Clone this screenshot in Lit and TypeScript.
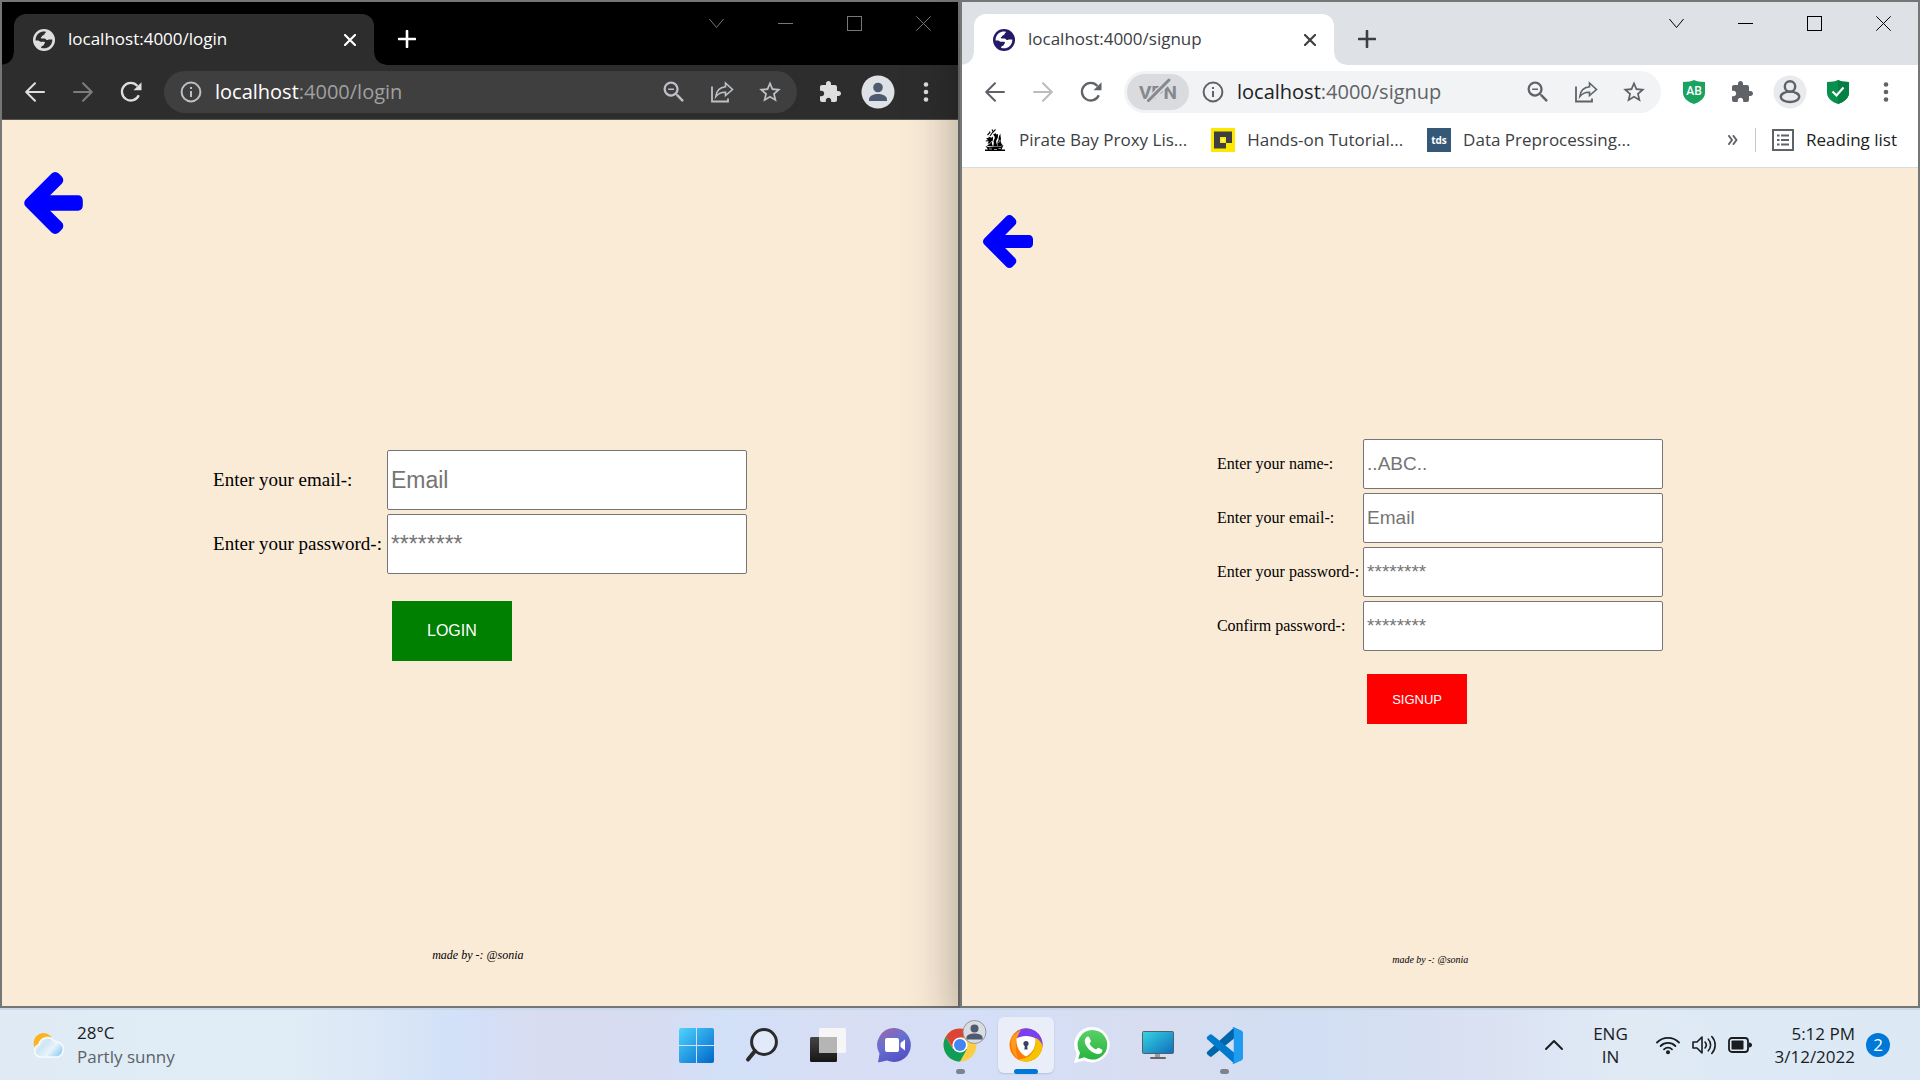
import { LitElement, html, svg, css, nothing, TemplateResult } from "lit";
import { customElement, property } from "lit/decorators.js";
import { classMap } from "lit/directives/class-map.js";

/* ---------- icons ---------- */

const icon = (w: number, h: number, box: string, body: unknown) => html`
  <svg width=${w} height=${h} viewBox=${box} aria-hidden="true" fill="currentColor">${body}</svg>`;

const line = (w: number, h: number, d: string, width = 2) =>
  icon(w, h, `0 0 ${w} ${h}`, svg`<path d=${d} fill="none" stroke="currentColor" stroke-width=${width}
    stroke-linecap="round" stroke-linejoin="round"></path>`);

const globe = icon(22, 22, "0 0 22 22", svg`
  <circle cx="11" cy="11" r="11"></circle>
  <path class="land" d="M2.6 11.6C2.4 7.600 4.500 4.200 8.200 3C9.500 2.600 11.600 2.400 12.800 2.700C13.200 3.400 12.400 3.900 11.600 4.300C12 5.400 11.200 6 9.800 6.400C8.900 6.700 9.200 7.600 8.400 8.100C7.400 8.600 7.500 9.400 8.500 9.500L11.600 9.600C12.700 9.800 12.900 11 14 11.100C15 11.100 15.400 10.500 16.600 10.500L19.300 10.500C19.600 14.800 16.500 18.600 12.600 19.200C11.200 19.500 9.400 19.300 8.200 19C8 17.700 8.700 16.900 10 16.800C11.300 16.600 10.600 15 11.600 14.600C12.400 14.200 12 12.900 11 12.800L7.500 12.700C6.400 12.500 6.200 11.600 5.200 11.500Z"></path>`);

const backIcon = line(20, 20, "M19 10H1.500M10 1.200L1.200 10L10 18.800");
const forwardIcon = line(20, 20, "M1 10H18.500M10 1.200L18.800 10L10 18.800");
const reloadIcon = icon(22, 22, "0 0 22 22", svg`
  <path d="M18.800 14.200A8.800 8.800 0 1 1 17.400 4.900" fill="none" stroke="currentColor" stroke-width="2.300"></path>
  <path d="M21.500 1.200V9.200H13.500Z"></path>`);
const infoIcon = icon(22, 22, "0 0 22 22", svg`
  <circle cx="11" cy="11" r="9.400" fill="none" stroke="currentColor" stroke-width="2"></circle>
  <rect x="10" y="10" width="2" height="6"></rect><rect x="10" y="6" width="2" height="2"></rect>`);
const zoomOutIcon = icon(28, 28, "0 0 24 24", svg`
  <path d="M15.500 14h-.79l-.28-.27A6.471 6.471 0 0 0 16 9.500 6.500 6.500 0 1 0 9.500 16c1.610 0 3.090-.59 4.230-1.570l.27.28v.79l5 4.990L20.490 19l-4.990-5zm-6 0C7.010 14 5 11.990 5 9.500S7.010 5 9.500 5 14 7.010 14 9.500 11.990 14 9.500 14zM7 8.900h5v1.300H7z"></path>`);
const shareIcon = icon(24, 24, "0 0 24 24", svg`
  <path d="M2 6.500V21.500H18V18.500" fill="none" stroke="currentColor" stroke-width="1.800"></path>
  <path d="M15.500 3L22.500 9.500L15.500 15.500V12.200C11.500 12 8.500 13 5.800 16.600C6.300 11 9.500 7.300 15.500 6.700Z" fill="none" stroke="currentColor" stroke-width="1.600" stroke-linejoin="miter"></path>`);
const starIcon = icon(26, 26, "0 0 24 24", svg`
  <path d="M22 9.240l-7.190-.62L12 2 9.190 8.630 2 9.240l5.460 4.730L5.820 21 12 17.270 18.180 21l-1.630-7.030L22 9.240zM12 15.400l-3.760 2.270 1-4.280-3.320-2.880 4.380-.38L12 6.100l1.710 4.040 4.380.38-3.320 2.880 1 4.280L12 15.400z"></path>`);
const puzzleIcon = icon(24, 24, "0 0 24 24", svg`
  <path d="M20.500 11H19V7c0-1.100-.9-2-2-2h-4V3.500C13 2.120 11.880 1 10.500 1S8 2.120 8 3.500V5H4c-1.100 0-1.990.9-1.990 2v3.800H3.500c1.490 0 2.700 1.210 2.700 2.700s-1.210 2.700-2.700 2.700H2V20c0 1.100.9 2 2 2h3.800v-1.500c0-1.490 1.210-2.700 2.700-2.700 1.490 0 2.700 1.210 2.700 2.700V22H17c1.100 0 2-.9 2-2v-4h1.500c1.380 0 2.500-1.120 2.500-2.500S21.880 11 20.500 11z"></path>`);
const dotsIcon = icon(6, 20, "0 0 6 20", svg`
  <circle cx="3" cy="2.500" r="2.300"></circle><circle cx="3" cy="10" r="2.300"></circle><circle cx="3" cy="17.500" r="2.300"></circle>`);
const personDisc = icon(34, 34, "0 0 34 34", svg`
  <circle cx="17" cy="17" r="16.500" fill="#dee1e6"></circle>
  <circle cx="17" cy="12.500" r="4.800" fill="#4e5a70"></circle>
  <path d="M8 26V24.200C8 20.700 13.200 19 17 19S26 20.700 26 24.200V26Z" fill="#4e5a70"></path>`);
const outlinePerson = icon(34, 34, "0 0 34 34", svg`
  <circle cx="17" cy="17" r="16.500" fill="#e8eaed"></circle>
  <g fill="none" stroke="currentColor" stroke-width="2.400">
    <circle cx="17" cy="11.500" r="5.200"></circle>
    <ellipse cx="17" cy="21.800" rx="9.200" ry="5.200"></ellipse></g>`);
const shield = (fill: string, mark: unknown) => icon(22, 24, "0 0 22 24", svg`
  <path d="M11 0C13 1.200 17 2 22 2V13C22 18.500 16 22.500 11 24C6 22.500 0 18.500 0 13V2C5 2 9 1.200 11 0Z" fill=${fill}></path>${mark}`);
const adShield = shield("#1aa260", svg`<text x="11" y="15" text-anchor="middle" fill="#fff"
  font-family="Roboto, sans-serif" font-weight="500" font-size="12">AB</text>`);
const checkShield = shield("#0a8f4c", svg`<path d="M11 0C13 1.200 17 2 22 2V13C22 18.500 16 22.500 11 24Z" fill="#067f42"></path>
  <path d="M5.500 11.500L9.500 15.500L16.500 7.500" fill="none" stroke="#fff" stroke-width="2.200"></path>`);
const backArrow = (w: number, h: number) => icon(w, h, "192 181 1472 1558", svg`
  <path d="M1664 896v128q0 53-32.500 90.500t-84.500 37.500h-704l293 294q38 36 38 90t-38 90l-75 76q-37 37-90 37-52 0-91-37l-651-652q-37-37-37-90 0-52 37-91l651-650q38-38 91-38 52 0 90 38l75 74q38 38 38 91t-38 91l-293 293h704q52 0 84.500 37.500t32.500 90.500z"></path>`);

const shipIcon = icon(24, 24, "0 0 24 24", svg`
  <g fill="#000">
    <path d="M2.500 18L6 19.200L18 18.500L20.500 17L18.500 21.500H22V23H2V21.500H5Z"></path>
    <path d="M3 10.500L6 9.500L5.500 8.500L8.500 9.800L9.800 8.500C10.500 11 9.500 13 8.800 14.500C8.800 16 9.500 17 10 18.500L4 18L6.500 15.500L4.500 15.500C6.500 13.500 5.500 12 3 10.500Z"></path>
    <path d="M10 6.500L13 5L12.800 6.500L14.800 6C15.500 8.500 14.500 11 13.200 12.800C13 15 14 17 15 18.500L10 18.500C11.800 15 9.500 13.500 11.500 11C12.200 9.500 11.500 7.500 10 6.500Z"></path>
    <path d="M17.500 5.500C17 8 18.500 10 17.800 12C17.200 14 18.500 16 20 17.500L15 18.500C13.800 15.500 14.500 13.500 15.500 12C15.500 9.500 16 7.500 17.500 5.500Z"></path>
  </g>
  <path d="M4.500 7L7 4.500L6.500 3.500M7 8L9.500 4.500L12.500 1.500M10 3.500L9 1.500M2.800 13L6 12.500" fill="none" stroke="#000" stroke-width="1.100"></path>
  <path d="M6 21H9M11 21.500H14M15.500 20.500H18M6 16.500L9 13M15.500 15L17 12" stroke="#fff" stroke-width=".6"></path>`);
const tutorialIcon = icon(24, 24, "0 0 24 24", svg`
  <rect width="24" height="24" fill="#ffe800"></rect>
  <path d="M3 3.500H21V15H15V20.500H3Z" fill="#3c4043"></path>
  <rect x="9" y="9" width="6" height="6" fill="#ffe800"></rect>
  <rect x="10.500" y="10.500" width="3" height="3" fill="#fff27a"></rect>`);
const tdsIcon = icon(24, 24, "0 0 24 24", svg`
  <rect width="24" height="24" fill="#355876"></rect>
  <text x="12" y="15.500" text-anchor="middle" fill="#fff" font-family="Open Sans, sans-serif"
    font-weight="700" font-size="10">tds</text>`);
const readingIcon = icon(22, 22, "0 0 22 22", svg`
  <path d="M1 1H21V21H1Z" fill="none" stroke="currentColor" stroke-width="2"></path>
  <path d="M5 6.500H7.500M9 6.500H17M5 11H7.500M9 11H17M5 15.500H7.500M9 15.500H17" stroke="currentColor" stroke-width="2"></path>`);

const minimizeIcon = icon(15, 15, "0 0 15 15", svg`<rect y="7" width="15" height="1"></rect>`);
const maximizeIcon = icon(15, 15, "0 0 15 15", svg`<rect x=".5" y=".5" width="14" height="14" fill="none" stroke="currentColor"></rect>`);
const closeIcon = icon(15, 15, "0 0 15 15", svg`<path d="M.3 .3L14.700 14.700M14.700 .3L.3 14.700" stroke="currentColor"></path>`);
const searchTabsIcon = icon(15, 15, "0 0 15 15", svg`<path d="M.4 3L7.500 11.500L14.600 3" fill="none" stroke="currentColor"></path>`);

/* ---------- shared types ---------- */

interface Field { id: string; label: string; placeholder: string; type: string; }
interface Bookmark { title: string; icon: TemplateResult; }

/* ---------- form page shown inside a browser window ---------- */

@customElement("account-page")
export class AccountPage extends LitElement {
  @property({ type: Array }) fields: Field[] = [];
  @property() action = "";
  @property({ type: Boolean }) compact = false;

  static styles = css`
    :host { display: flex; flex: 1; min-height: 0; }
    .page {
      --label: 19px; --text: 23px; --field-w: 360px; --field-h: 60px; --col: 5px;
      --button-w: 120px; --button-text: 16px; --button-gap: 27px; --button-bg: #008000;
      --note: 12px; --note-line: 14px;
      flex: 1; display: flex; flex-direction: column;
      background: #faebd7; color: #000;
      font-family: "Liberation Serif", "Times New Roman", serif;
    }
    .page.compact {
      --label: 16px; --text: 19px; --field-w: 300px; --field-h: 50px; --col: 4px;
      --button-w: 100px; --button-text: 13px; --button-gap: 23px; --button-bg: #ff0000;
      --note: 10px; --note-line: 12px;
    }
    header { padding: 52px 22px 0; }
    .compact header { padding: 47px 21px 0; }
    header a { display: inline-flex; color: #0000ff; vertical-align: top; }
    svg { display: block; }
    form {
      flex: 1; display: grid; justify-content: center; align-content: center;
      grid-template-columns: auto var(--field-w); gap: 4px var(--col);
    }
    label { align-self: center; font-size: var(--label); line-height: 24px; white-space: nowrap; }
    input {
      box-sizing: border-box; width: 100%; height: var(--field-h);
      padding: 0 3px; border: 1px solid #767676; border-radius: 2px;
      background: #fff; font-family: "Liberation Sans", Arial, sans-serif; font-size: var(--text);
    }
    input::placeholder { color: #757575; }
    .submit {
      grid-column: 2; width: var(--button-w); height: var(--field-h);
      margin: calc(var(--button-gap) - 4px) 0 0 var(--col); padding: 0; border: 0;
      background: var(--button-bg); color: #fff;
      font-family: "Liberation Sans", Arial, sans-serif; font-size: var(--button-text);
    }
    footer {
      padding: 71px 0 44px 45%; font-style: italic;
      font-size: var(--note); line-height: var(--note-line);
    }
    .compact footer { padding: 59px 0 40px 45%; }
  `;

  render() {
    return html`
      <main class=${classMap({ page: true, compact: this.compact })}>
        <header><a href="#" aria-label="Back">${this.compact ? backArrow(50, 53) : backArrow(59, 62)}</a></header>
        <form @submit=${(e: Event) => e.preventDefault()}>
          ${this.fields.map((f) => html`
            <label for=${f.id}>${f.label}</label>
            <input id=${f.id} type=${f.type} placeholder=${f.placeholder} autocomplete="off">`)}
          <button class="submit" type="submit">${this.action}</button>
        </form>
        <footer>made by -: @sonia</footer>
      </main>`;
  }
}

/* ---------- browser window ---------- */

@customElement("browser-window")
export class BrowserWindow extends LitElement {
  @property() path = "";
  @property({ type: Boolean }) dark = false;
  @property({ type: Boolean }) vpn = false;
  @property({ type: Array }) bookmarks: Bookmark[] = [];
  @property({ attribute: false }) extensions: { name: string; icon: TemplateResult }[] = [];

  static styles = css`
    :host { display: flex; min-width: 0; font-family: "Open Sans", "Noto Sans", sans-serif; }
    .window {
      --strip: #dee1e6; --bar: #fff; --box: #f1f3f4; --fg: #3c4043; --icon: #5f6368;
      --faint: #babcbe; --host: #202124; --path: #5f6368; --caption: #000;
      --edge: #dadce0; --globe: #241a66;
      flex: 1; min-width: 0; display: flex; flex-direction: column;
      border: 2px solid #757676; background: var(--bar);
    }
    .dark {
      --strip: #000; --bar: #2d2d2d; --box: #3f3f3f; --fg: #fff; --icon: #dedede;
      --faint: #7c7c7c; --host: #fff; --path: #a0a0a0; --caption: #777;
      --edge: #5a5354; --globe: #dedede;
    }
    svg { display: block; flex: none; }
    button {
      display: flex; align-items: center; justify-content: center; flex: none;
      padding: 0; border: 0; background: none; color: var(--icon); font: inherit;
    }
    .strip { display: flex; height: 63px; background: var(--strip); }
    .tab {
      position: relative; box-sizing: border-box; width: 360px; height: 51px;
      margin: 12px 0 0 12px; padding: 0 12px 0 19px;
      display: flex; align-items: center; gap: 13px;
      border-radius: 12px 12px 0 0; background: var(--bar); color: var(--fg);
      font-size: 17px; white-space: nowrap;
    }
    .tab::before, .tab::after {
      content: ""; position: absolute; bottom: 0; width: 12px; height: 12px;
    }
    .tab::before { left: -12px; background: radial-gradient(circle at 0 0, transparent 11px, var(--bar) 12px); }
    .tab::after { right: -12px; background: radial-gradient(circle at 100% 0, transparent 11px, var(--bar) 12px); }
    .tab .title { flex: 1; }
    .title, .bookmarks span { padding-bottom: 2px; }
    .tab .favicon { color: var(--globe); }
    .land { fill: var(--bar); }
    .tab button { width: 24px; height: 24px; color: var(--fg); }
    .new-tab { width: 42px; height: 42px; margin: 16px 0 0 12px; color: var(--fg); }
    .captions { display: flex; margin-left: auto; }
    .captions button { width: 69px; height: 43px; color: var(--caption); }
    .toolbar { display: flex; align-items: center; height: 54px; padding: 0 8px 0 9px; }
    .toolbar button { width: 48px; height: 42px; }
    .toolbar .off { color: var(--faint); }
    .omnibox {
      flex: 1; min-width: 0; display: flex; align-items: center; height: 42px;
      margin: 0 9px; padding: 0 3px; box-sizing: border-box; border-radius: 21px; background: var(--box);
    }
    .dark .omnibox button { color: #bdc1c6; }
    .address { flex: 1; min-width: 0; font-size: 20px; line-height: 30px; color: var(--path); white-space: nowrap; outline: none; }
    .address b { font-weight: 400; color: var(--host); }
    .omnibox .vpn {
      position: relative; width: 62px; height: 36px; border-radius: 18px; background: #d9dbdf;
      color: #85888c; font-family: Roboto, sans-serif; font-weight: 700; font-size: 19px;
    }
    .vpn svg { position: absolute; left: 18px; top: 4px; }
    .bookmarks {
      display: flex; align-items: center; height: 48px; padding: 0 21px 6px;
      box-sizing: border-box; color: var(--fg); font-size: 17px; white-space: nowrap;
    }
    .bookmarks a { display: flex; align-items: center; gap: 12px; margin-right: 24px; color: inherit; text-decoration: none; }
    .bookmarks .more { width: 24px; height: 24px; margin-left: auto; }
    .bookmarks .reading { gap: 12px; margin-left: 10px; padding-left: 16px; border-left: 1px solid #c6c8cb; height: 24px; }
    .reading span { color: #202124; }
    .edge { height: 1px; background: var(--edge); }
    .view { flex: 1; display: flex; min-height: 0; }
  `;

  render() {
    const cls = classMap({ window: true, dark: this.dark });
    return html`
      <section class=${cls}>
        <div class="strip">
          <div class="tab">
            <span class="favicon">${globe}</span>
            <span class="title">localhost:4000${this.path}</span>
            <button aria-label="Close tab">${icon(12, 12, "0 0 12 12", svg`<path d="M1 1L11 11M11 1L1 11" stroke="currentColor" stroke-width="2.200" stroke-linecap="round"></path>`)}</button>
          </div>
          <button class="new-tab" aria-label="New tab">${icon(18, 18, "0 0 18 18", svg`<path d="M9 1V17M1 9H17" stroke="currentColor" stroke-width="2.600" stroke-linecap="round"></path>`)}</button>
          <div class="captions">
            <button aria-label="Search tabs">${searchTabsIcon}</button>
            <button aria-label="Minimize">${minimizeIcon}</button>
            <button aria-label="Maximize">${maximizeIcon}</button>
            <button aria-label="Close">${closeIcon}</button>
          </div>
        </div>
        <nav class="toolbar">
          <button aria-label="Back">${backIcon}</button>
          <button class="off" aria-label="Forward" disabled>${forwardIcon}</button>
          <button aria-label="Reload">${reloadIcon}</button>
          <div class="omnibox">
            ${this.vpn ? html`<button class="vpn" aria-label="VPN off">VPN${icon(26, 26, "0 0 26 26", svg`
              <path d="M1 25L24 3" stroke="#d9dbdf" stroke-width="6"></path>
              <path d="M3.500 22.500L24 2" stroke="currentColor" stroke-width="3" stroke-linecap="round"></path>`)}</button>` : nothing}
            <button aria-label="Site information">${infoIcon}</button>
            <div class="address" role="textbox" contenteditable="true" spellcheck="false" aria-label="Address"><b>localhost</b>:4000${this.path}</div>
            <button aria-label="Zoom">${zoomOutIcon}</button>
            <button aria-label="Share">${shareIcon}</button>
            <button aria-label="Bookmark">${starIcon}</button>
          </div>
          ${this.extensions.map((x) => html`<button aria-label=${x.name}>${x.icon}</button>`)}
          <button aria-label="Menu">${dotsIcon}</button>
        </nav>
        ${this.bookmarks.length ? html`
          <nav class="bookmarks">
            ${this.bookmarks.map((b) => html`<a href="#">${b.icon}<span>${b.title}</span></a>`)}
            <button class="more" aria-label="More bookmarks">${line(10, 10, "M1 1L4 5L1 9M5.500 1L8.500 5L5.500 9", 2)}</button>
            <button class="reading">${readingIcon}<span>Reading list</span></button>
          </nav>` : nothing}
        <div class="edge"></div>
        <div class="view"><slot></slot></div>
      </section>`;
  }
}

/* ---------- taskbar ---------- */

const startIcon = icon(35, 35, "0 0 35 35", svg`
  <defs><linearGradient id="st" x1="0" y1="0" x2="1" y2="1"><stop offset="0" stop-color="#4fd4ff"></stop><stop offset="1" stop-color="#0067c9"></stop></linearGradient></defs>
  <path fill="url(#st)" d="M2 0H17V17H0V2A2 2 0 0 1 2 0ZM18 0H33A2 2 0 0 1 35 2V17H18ZM0 18H17V35H2A2 2 0 0 1 0 33ZM18 18H35V33A2 2 0 0 1 33 35H18Z"></path>`);
const searchIcon = icon(34, 36, "0 0 34 36", svg`
  <circle cx="19" cy="15" r="12.400" fill="#e2e9f8" stroke="#2b2b2b" stroke-width="3"></circle>
  <path d="M10 24L3 32.500" stroke="#2b2b2b" stroke-width="4" stroke-linecap="round"></path>`);
const taskViewIcon = icon(36, 34, "0 0 36 34", svg`
  <defs><linearGradient id="tv" x1="0" y1="0" x2="0" y2="1"><stop offset="0" stop-color="#444"></stop><stop offset="1" stop-color="#161616"></stop></linearGradient></defs>
  <rect y="9" width="27" height="25" rx="1.500" fill="url(#tv)"></rect>
  <rect x="9" y="0" width="27" height="25" rx="1.500" fill="#f6f6f6"></rect>
  <path d="M9 9H27V25H10A1 1 0 0 1 9 24Z" fill="#b5b5b5"></path>`);
const chatIcon = icon(35, 35, "0 0 35 35", svg`
  <defs><linearGradient id="ch" x1=".1" y1="0" x2=".6" y2="1"><stop offset="0" stop-color="#a066a8"></stop><stop offset=".45" stop-color="#6670cf"></stop><stop offset="1" stop-color="#5450c4"></stop></linearGradient></defs>
  <path d="M18 0A17 17 0 1 1 10 32.500L1 34.500L2.500 25.500A17 17 0 0 1 18 0Z" fill="url(#ch)"></path>
  <rect x="8" y="10" width="14" height="14" rx="2" fill="#fff"></rect>
  <path d="M23.500 15L28 11.500V22.500L23.500 19Z" fill="#fff"></path>`);
const chromeIcon = icon(46, 46, "0 0 46 46", svg`
  <circle cx="23" cy="23" r="16.500" fill="#ffcd41"></circle>
  <path d="M8.700 14.800A16.500 16.500 0 0 0 23 39.500L30 27L16 27Z" fill="#0f9d58"></path>
  <path d="M23 15.500H37.600A16.500 16.500 0 0 0 8.700 14.800L16.500 27Z" fill="#db4437"></path>
  <circle cx="23" cy="23" r="7.600" fill="#fff"></circle><circle cx="23" cy="23" r="6" fill="#4285f4"></circle>
  <circle cx="37.500" cy="10" r="11.500" fill="#d9dce0" stroke="#94979b"></circle>
  <circle cx="37.500" cy="6.500" r="4" fill="#4e5a70"></circle>
  <path d="M29.500 17.500V15.500C29.500 12.800 33.500 11.500 37.500 11.500S45.500 12.800 45.500 15.500V17.500Z" fill="#4e5a70"></path>`);
const avastIcon = icon(34, 34, "0 0 34 34", svg`
  <circle cx="17" cy="17" r="16.500" fill="#ff7a00"></circle>
  <path d="M8 3A16.500 16.500 0 0 1 33.500 19C31 10 22 5 8 11Z" fill="#7b3ff2"></path>
  <path d="M33.500 19A16.500 16.500 0 0 1 9 31.500C20 31 27 25 27 10C31 12 33 15 33.500 19Z" fill="#f5c400"></path>
  <path d="M12 .8L3 9C.5 16 3 25 9 31.500C6.500 24 6 16 8 10Z" fill="#ff9a1f"></path>
  <path d="M17 8C20.500 8 24 9 26.500 10.500C27 18 24 25 17 28.500C10 25 7 18 7.500 10.500C10 9 13.500 8 17 8Z" fill="#fff"></path>
  <circle cx="17" cy="15.500" r="2.600" fill="#3a3f66"></circle><path d="M16 16H18L18.600 21.500H15.400Z" fill="#3a3f66"></path>`);
const whatsappIcon = icon(36, 36, "0 0 36 36", svg`
  <defs><linearGradient id="wa" x1="0" y1="0" x2="0" y2="1"><stop offset="0" stop-color="#5bd066"></stop><stop offset="1" stop-color="#27b43e"></stop></linearGradient></defs>
  <path d="M18.500 0A17.700 17.700 0 1 1 10 33.500L0 36L2.600 26.500A17.700 17.700 0 0 1 18.500 0Z" fill="#fff"></path>
  <path d="M18.500 3A14.800 14.800 0 1 1 10.600 30.300L4.300 32L6 25.800A14.800 14.800 0 0 1 18.500 3Z" fill="url(#wa)"></path>
  <path transform="translate(6.500 5.500)" fill="#fff" d="M6.200 4.500C7 3.700 8.200 3.700 8.700 4.700L10.300 8.200C10.600 9 10 9.800 9 11C10.800 14.200 12.800 15.900 15.600 17.100C16.700 15.800 17.200 15 18.100 15.300L21.400 17C22.300 17.500 22.100 19 21 20.200C18.500 22.300 14.800 21.700 11 19C7.500 16.500 4.900 13 4.300 9.800C4 7.500 4.800 5.800 6.200 4.500Z"></path>`);
const desktopIcon = icon(34, 30, "0 0 34 30", svg`
  <defs><linearGradient id="pc" x1="0" y1="0" x2="1" y2="1"><stop offset="0" stop-color="#35d6e0"></stop><stop offset="1" stop-color="#0f6cbd"></stop></linearGradient></defs>
  <rect x="14" y="23" width="5" height="5" fill="#9a9a9a"></rect><rect x="9" y="27" width="16" height="2" rx="1" fill="#666"></rect>
  <rect x="1.500" y="1.500" width="31" height="22" rx="1" fill="url(#pc)" stroke="#555f66"></rect>`);
const codeIcon = icon(37, 37, "0 0 100 100", svg`
  <path d="M97 11L76 1.200L4 66C1.500 68.500 1.500 71.500 4 74L9.500 79C11.500 80.800 14 81 16.500 79L75 32Z" fill="#0065a9"></path>
  <path d="M97 89L76 98.800L4 34C1.500 31.500 1.500 28.500 4 26L9.500 21C11.500 19.200 14 19 16.500 21L75 68Z" fill="#007acc"></path>
  <path d="M76 99C73 100 70.500 98.500 69 97C72 100 75 96.500 75 93.500V6.500C75 3.500 72 0 69 3C70.500 1.500 73 0 76 1.200L96.500 11C99 12 100 14 100 16.500V83.500C100 86 99 88 96.500 89Z" fill="#1f9cf0"></path>`);
const weatherIcon = icon(34, 28, "0 0 34 28", svg`
  <defs><linearGradient id="cl" x1="0" y1="0" x2="1" y2=".6"><stop offset="0" stop-color="#fff"></stop><stop offset=".4" stop-color="#cfe6f4"></stop><stop offset=".7" stop-color="#e8f4fb"></stop><stop offset="1" stop-color="#9fd3f2"></stop></linearGradient></defs>
  <circle cx="11.500" cy="12" r="10" fill="#fbb321"></circle>
  <path d="M8 26A6.500 6.500 0 0 1 7 13.500A8.500 8.500 0 0 1 22.500 10.500A8 8 0 0 1 26 26Z" fill="url(#cl)" stroke="#f7fbfd" stroke-width="1.500"></path>`);
const wifiIcon = icon(24, 20, "0 0 24 20", svg`
  <g fill="none" stroke="currentColor" stroke-width="1.800" stroke-linecap="round">
    <path d="M1 7.500A15.500 15.500 0 0 1 23 7.500"></path><path d="M4.600 11A10.500 10.500 0 0 1 19.400 11"></path><path d="M8 14.300A5.700 5.700 0 0 1 16 14.300"></path></g>
  <circle cx="12" cy="17.300" r="2"></circle>`);
const speakerIcon = icon(24, 20, "0 0 24 20", svg`
  <g fill="none" stroke="currentColor" stroke-width="1.600" stroke-linecap="round" stroke-linejoin="round">
    <path d="M1 7H5L10 2V18L5 13H1Z"></path><path d="M13 7A4.500 4.500 0 0 1 13 13"></path><path d="M16.300 4.200A8.500 8.500 0 0 1 16.300 15.800"></path><path d="M19.800 1.500A12.500 12.500 0 0 1 19.800 18.500"></path></g>`);
const batteryIcon = icon(24, 16, "0 0 24 16", svg`
  <rect x="1" y="1" width="19" height="14" rx="3" fill="none" stroke="currentColor" stroke-width="1.800"></rect>
  <rect x="3.500" y="3.500" width="12" height="9" rx=".8"></rect><path d="M21 5.500C23 5.500 24 6.500 24 8S23 10.500 21 10.500Z"></path>`);

const apps = [
  { name: "Start", icon: startIcon, state: "" },
  { name: "Search", icon: searchIcon, state: "" },
  { name: "Task view", icon: taskViewIcon, state: "" },
  { name: "Chat", icon: chatIcon, state: "" },
  { name: "Google Chrome", icon: chromeIcon, state: "running" },
  { name: "Secure browser", icon: avastIcon, state: "active" },
  { name: "WhatsApp", icon: whatsappIcon, state: "" },
  { name: "Remote desktop", icon: desktopIcon, state: "" },
  { name: "Visual Studio Code", icon: codeIcon, state: "running" },
];

@customElement("task-bar")
export class TaskBar extends LitElement {
  static styles = css`
    :host {
      display: block; position: relative; z-index: 2; color: #1a1c1f;
      font-family: "Open Sans", "Noto Sans", sans-serif;
      background: linear-gradient(90deg, #dfeaf5 0%, #e0edf6 15%, #dce8f6 19%, #d2e0f9 24%, #d8dcf1 28%, #d6dcf2 34%, #d2e0f8 38%, #d8def4 44%, #d4dff7 52%, #d8ddf1 60%, #d1def3 68%, #dae1f2 77%, #dfeaf5 84%, #dce9f4 100%);
    }
    .bar {
      display: grid; grid-template-columns: 1fr auto 1fr; box-sizing: border-box; height: 72px;
      border-top: 2px solid #cbd8e8;
    }
    svg { display: block; flex: none; overflow: visible; }
    button { padding: 0; border: 0; background: none; color: inherit; font: inherit; }
    .weather {
      justify-self: start; display: flex; align-items: center; gap: 11px;
      padding: 0 32px; text-align: left; font-size: 17px; line-height: 24px;
    }
    .weather small { display: block; font-size: inherit; color: #5c6168; }
    .apps { display: flex; }
    .app {
      position: relative; display: flex; align-items: center; justify-content: center;
      width: 56px; height: 56px; margin: 7px 5px; border-radius: 6px;
    }
    .app.active { background: #e9eef9; box-shadow: 0 1px 2px #b8c0d8; }
    .app.running::after, .app.active::after {
      content: ""; position: absolute; bottom: -1px; left: 50%; width: 9px; height: 5px;
      margin-left: -4px; border-radius: 3px; background: #7c828e;
    }
    .app.active::after { width: 24px; margin-left: -12px; background: #0078d7; }
    .tray {
      justify-self: end; display: flex; align-items: center; padding: 0 30px 0 0;
      font-size: 17px; line-height: 23px;
    }
    .lang { width: 54px; margin: 0 19px 0 20px; text-align: center; }
    .status { display: flex; align-items: center; gap: 12px; }
    .clock { margin: 0 11px 0 22px; text-align: right; }
    .count { width: 24px; height: 24px; border-radius: 12px; background: #0078d7; color: #fff; line-height: 24px; }
  `;

  render() {
    return html`
      <footer class="bar">
        <button class="weather">${weatherIcon}<span>28°C<small>Partly sunny</small></span></button>
        <nav class="apps">
          ${apps.map((a) => html`<button class="app ${a.state}" aria-label=${a.name}>${a.icon}</button>`)}
        </nav>
        <div class="tray">
          <button aria-label="Show hidden icons">${line(18, 10, "M1 9L9 1L17 9", 2)}</button>
          <button class="lang">ENG<br>IN</button>
          <button class="status" aria-label="Network, volume and battery">${wifiIcon}${speakerIcon}${batteryIcon}</button>
          <button class="clock">5:12 PM<br>3/12/2022</button>
          <button class="count">2</button>
        </div>
      </footer>`;
  }
}

/* ---------- desktop ---------- */

const loginFields: Field[] = [
  { id: "login-email", label: "Enter your email-:", placeholder: "Email", type: "email" },
  { id: "login-password", label: "Enter your password-:", placeholder: "********", type: "password" },
];
const signupFields: Field[] = [
  { id: "name", label: "Enter your name-:", placeholder: "..ABC..", type: "text" },
  { id: "email", label: "Enter your email-:", placeholder: "Email", type: "email" },
  { id: "password", label: "Enter your password-:", placeholder: "********", type: "password" },
  { id: "confirm", label: "Confirm password-:", placeholder: "********", type: "password" },
];
const bookmarks: Bookmark[] = [
  { title: "Pirate Bay Proxy Lis...", icon: shipIcon },
  { title: "Hands-on Tutorial...", icon: tutorialIcon },
  { title: "Data Preprocessing...", icon: tdsIcon },
];
const darkExtensions = [
  { name: "Extensions", icon: puzzleIcon },
  { name: "Profile", icon: personDisc },
];
const lightExtensions = [
  { name: "Ad blocker", icon: adShield },
  { name: "Extensions", icon: puzzleIcon },
  { name: "Profile", icon: outlinePerson },
  { name: "Security", icon: checkShield },
];

@customElement("app-root")
export class AppRoot extends LitElement {
  static styles = css`
    :host { display: flex; flex-direction: column; height: 100vh; overflow: hidden; }
    .windows { flex: 1; min-height: 0; display: grid; grid-template-columns: 1fr 1fr; }
    .front { z-index: 1; box-shadow: 0 24px 50px rgba(0, 0, 0, .36); }
  `;

  render() {
    return html`
      <div class="windows">
        <browser-window dark path="/login" .extensions=${darkExtensions}>
          <account-page .fields=${loginFields} action="LOGIN"></account-page>
        </browser-window>
        <browser-window class="front" vpn path="/signup" .extensions=${lightExtensions} .bookmarks=${bookmarks}>
          <account-page compact .fields=${signupFields} action="SIGNUP"></account-page>
        </browser-window>
      </div>
      <task-bar></task-bar>`;
  }
}
